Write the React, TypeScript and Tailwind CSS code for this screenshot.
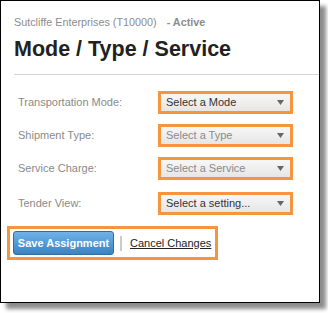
import React from 'react';

const rows = [
  { label: 'Transportation Mode:', value: 'Select a Mode', active: true, gap: 'mt-0' },
  { label: 'Shipment Type:', value: 'Select a Type', active: false, gap: 'mt-[10px]' },
  { label: 'Service Charge:', value: 'Select a Service', active: false, gap: 'mt-[10px]' },
  { label: 'Tender View:', value: 'Select a setting...', active: true, gap: 'mt-[12px]' },
];

const SelectBox = ({ value, active }: { value: string; active: boolean }) => (
  <div className="w-[135px] h-[23px] border-[3px] border-[#f5953f] bg-gradient-to-b from-[#f7f7f7] to-[#e6e6e6] flex items-center justify-between pl-[5px] pr-[6px]">
    <span className={`text-[11px] leading-none whitespace-nowrap ${active ? 'text-[#333]' : 'text-[#8a8a8a]'}`}>{value}</span>
    <svg width="7" height="5" viewBox="0 0 7 5"><path d="M0 0h7L3.5 5z" fill="#666" /></svg>
  </div>
);

export default function App() {
  return (
    <div className="w-[328px] h-[313px] bg-white font-['Liberation_Sans',Arial,sans-serif]">
      <div className="w-[320px] h-[303px] border border-black bg-white shadow-[6px_6px_4px_rgba(0,0,0,0.45)] flex flex-col">
        <div className="pl-[13px] pt-[14px] text-[10.8px] leading-[14px] text-[#8c8c8c] whitespace-nowrap">
          Sutcliffe Enterprises (T10000)<span className="ml-[10px] font-bold">- Active</span>
        </div>
        <h1 className="pl-[13px] mt-[7px] text-[21.5px] leading-[26px] font-bold text-[#222] whitespace-nowrap">Mode / Type / Service</h1>
        <div className="ml-[13px] mt-[12px] h-px bg-[#d4d4d4]" />
        <div className="mt-[16px] flex flex-col">
          {rows.map(r => (
            <div key={r.label} className={`flex items-center ${r.gap}`}>
              <span className="w-[157px] pl-[17px] text-[11px] text-[#8a8a8a] whitespace-nowrap">{r.label}</span>
              <SelectBox value={r.value} active={r.active} />
            </div>
          ))}
        </div>
        <div className="ml-[6px] mt-[11px] w-[211px] h-[34px] border-[3px] border-[#f5953f] flex items-center pl-[3px]">
          <button className="w-[101px] h-[24px] rounded-[3px] border border-[#2f6da3] bg-gradient-to-b from-[#6fb3e6] to-[#3a82c4] text-white text-[11px] font-bold whitespace-nowrap">
            Save Assignment
          </button>
          <span className="ml-[6px] w-[2px] h-[15px] bg-[#ccc]" />
          <span className="ml-[8px] text-[11px] text-[#222] underline whitespace-nowrap">Cancel Changes</span>
        </div>
      </div>
    </div>
  );
}
